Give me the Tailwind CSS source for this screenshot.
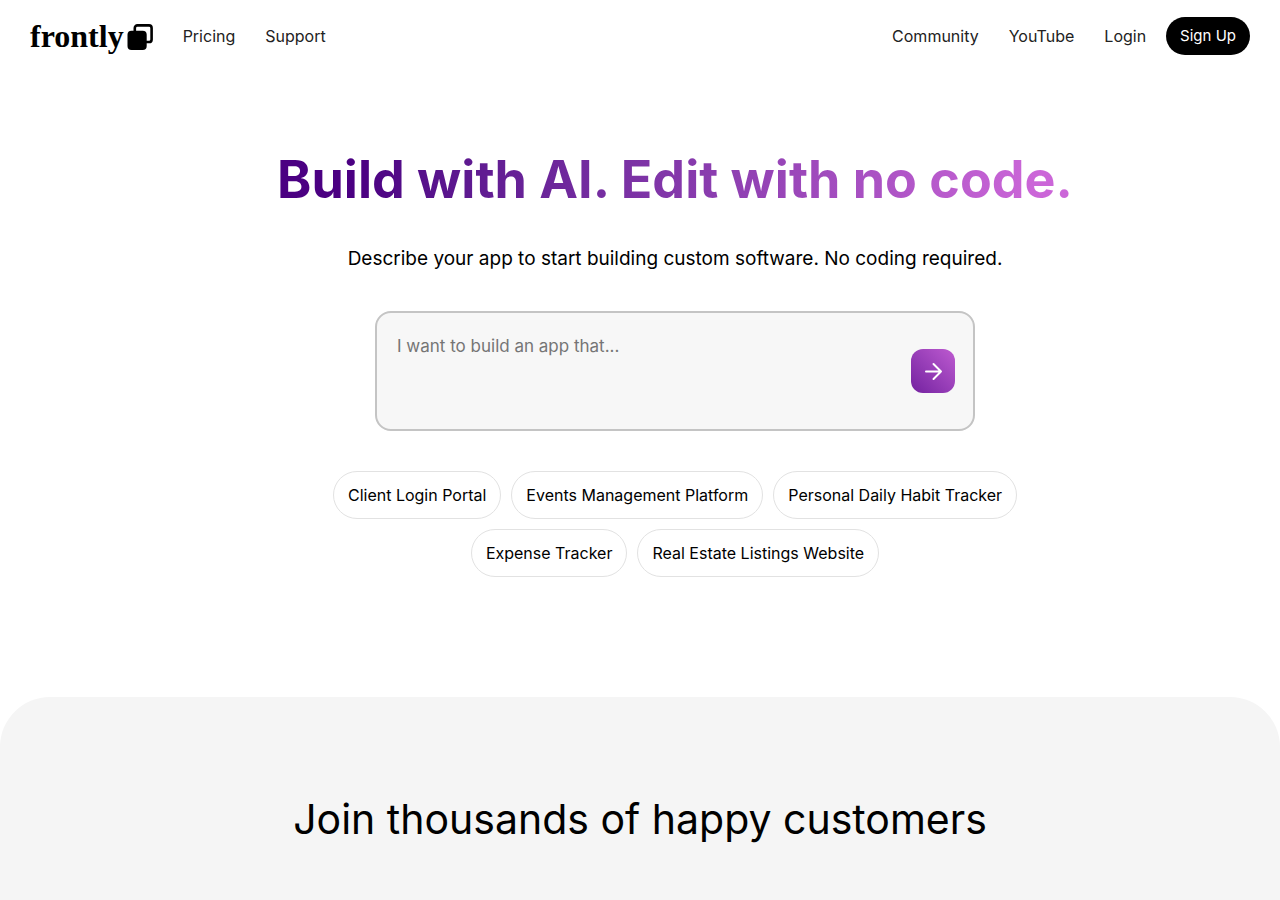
<!DOCTYPE html>
<html lang="en">
<head>
    <meta charset="UTF-8">
    <meta name="viewport" content="width=device-width, initial-scale=1.0">
    <title>Frontly</title>
    <script src="https://cdn.jsdelivr.net/npm/@tailwindcss/browser@4"></script>
</head>
<body class="min-h-screen flex flex-col bg-white text-black font-['Inter',sans-serif]">
    <header class="flex flex-wrap items-center justify-between px-[30px] py-4">
        <nav class="flex items-center gap-[30px] text-[#222222]">
            <a href="#" class="flex items-center gap-[3px] text-black" aria-label="frontly">
                <span class="font-['Liberation_Serif',serif] font-bold text-[32px] leading-10">frontly</span>
                <svg class="w-[26px] h-7" viewBox="0 0 26 28" fill="none">
                    <rect x="7.8" y="3.4" width="16.8" height="16.6" rx="2.6" stroke="black" stroke-width="2.6"/>
                    <rect x="0.5" y="8.8" width="19.2" height="19.2" rx="4" fill="black"/>
                </svg>
            </a>
            <a href="#">Pricing</a>
            <a href="#">Support</a>
        </nav>
        <nav class="flex items-center gap-[30px] text-[#222222]">
            <a href="#">Community</a>
            <a href="#">YouTube</a>
            <div class="flex items-center gap-5">
                <a href="#">Login</a>
                <a href="#" class="bg-black text-white text-[15px] leading-6 rounded-full px-[14px] py-[7px]">Sign Up</a>
            </div>
        </nav>
    </header>

    <main class="flex flex-col items-center pl-[70px] pt-[72px] pb-[120px] text-center">
        <h1 class="text-[52px] leading-[72px] font-bold bg-linear-to-r from-[#4b0082] from-10% to-[#cb66d8] to-95% bg-clip-text text-transparent">Build with AI. Edit with no code.</h1>
        <p class="mt-7 text-[19px] leading-[30px]">Describe your app to start building custom software. No coding required.</p>

        <form class="relative mt-[37px] w-full max-w-[600px]">
            <textarea aria-label="Describe your app" placeholder="I want to build an app that..." class="block w-full h-[120px] resize-none rounded-2xl border-2 border-[#c4c4c4] bg-[#f7f7f7] py-5 pl-5 pr-20 text-[17px] leading-[26px] placeholder:text-[#757575]"></textarea>
            <button type="submit" aria-label="Start building" class="absolute right-5 top-[38px] size-11 flex items-center justify-center rounded-xl bg-linear-45 from-[#7420a0] to-[#be5ad0] text-white">
                <svg class="size-6" viewBox="0 0 24 24" fill="none" stroke="currentColor" stroke-width="2" stroke-linecap="round" stroke-linejoin="round">
                    <path d="M5 12.5h15M12.5 5l7.5 7.5-7.5 7.5"/>
                </svg>
            </button>
        </form>

        <div class="mt-10 flex flex-wrap justify-center gap-[10px] max-w-[700px]">
            <button class="rounded-full border border-[#e2e2e2] px-[14px] h-12">Client Login Portal</button>
            <button class="rounded-full border border-[#e2e2e2] px-[14px] h-12">Events Management Platform</button>
            <button class="rounded-full border border-[#e2e2e2] px-[14px] h-12">Personal Daily Habit Tracker</button>
            <button class="rounded-full border border-[#e2e2e2] px-[14px] h-12">Expense Tracker</button>
            <button class="rounded-full border border-[#e2e2e2] px-[14px] h-12">Real Estate Listings Website</button>
        </div>
    </main>

    <section class="grow rounded-t-[50px] bg-[#f5f5f5] pt-[92px] pb-12 text-center">
        <h2 class="text-[41px] leading-[60px]">Join thousands of happy customers</h2>
    </section>
</body>
</html>
